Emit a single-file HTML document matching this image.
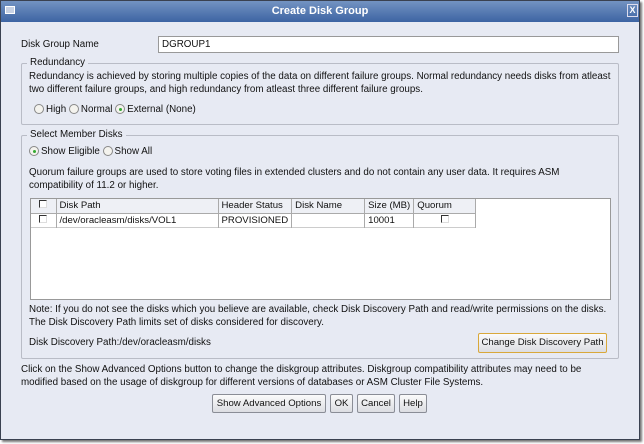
<!DOCTYPE html>
<html><head><style>
*{margin:0;padding:0;box-sizing:border-box}
body{width:644px;height:444px;background:#fff;font-family:"Liberation Sans",sans-serif;font-size:9.8px;color:#111;position:relative;overflow:hidden}
.win{position:absolute;left:0;top:0;width:640px;height:440px;background:#e7eaf3;border:1px solid #3a4150;box-shadow:2px 2px 2px #777}
.title{position:absolute;left:0;top:0;width:638px;height:21px;background:linear-gradient(#7393c2,#3d64a3);color:#fff;font-weight:bold;font-size:11px;text-align:center;line-height:21px}
.t{position:absolute;white-space:nowrap;line-height:12px}
.box{position:absolute;border:1px solid #b9bcc6;border-radius:2px}
.lg{position:absolute;background:#e7eaf3;padding:0 3px;white-space:nowrap;line-height:12px}
.rad{display:inline-block;width:10px;height:10px;border-radius:50%;border:1px solid #888;background:#f4f3ee;vertical-align:-2px;margin-right:2px;position:relative}
.rad.on::after{content:"";position:absolute;left:2.5px;top:2.5px;width:3px;height:3px;border-radius:50%;background:#3a3}
.cb{display:inline-block;width:8px;height:8px;border:1px solid #333;border-right-color:#ddd;border-bottom-color:#ddd;background:#fff}
.btn{position:absolute;border:1px solid #8a8d96;border-radius:2px;background:linear-gradient(#fbfbfb,#dcdde2);text-align:center;line-height:17px;white-space:nowrap;font-size:9.6px}
table{table-layout:fixed;border-collapse:collapse;font-size:9.6px}
td{border-right:1px solid #aaa;padding:0 3px;height:14px;white-space:nowrap;overflow:hidden}
</style></head><body>
<div class="win">
<div class="title">Create Disk Group</div>
<div style="position:absolute;left:4px;top:5px;width:10px;height:8px;border:1px solid #fff;background:#c8d2e4"></div>
<div style="position:absolute;left:626px;top:3px;width:11px;height:13px;border:1px solid #dde;color:#fff;font-weight:bold;font-size:9px;text-align:center;line-height:11px">X</div>
<div class="t" style="left:20px;top:38px">Disk Group Name</div>
<div style="position:absolute;left:157px;top:35px;width:461px;height:17px;background:#fff;border:1px solid #999"></div>
<div class="t" style="left:161px;top:38px">DGROUP1</div>

<div class="box" style="left:20px;top:62px;width:598px;height:62px"></div>
<div class="lg" style="left:26px;top:56px">Redundancy</div>
<div class="t" style="left:28px;top:70px">Redundancy is achieved by storing multiple copies of the data on different failure groups. Normal redundancy needs disks from atleast</div>
<div class="t" style="left:28px;top:83px">two different failure groups, and high redundancy from atleast three different failure groups.</div>
<div class="t" style="left:33px;top:103px"><span class="rad"></span>High <span class="rad"></span>Normal <span class="rad on"></span>External (None)</div>

<div class="box" style="left:20px;top:134px;width:598px;height:224px"></div>
<div class="lg" style="left:26px;top:128px">Select Member Disks</div>
<div class="t" style="left:28px;top:145px"><span class="rad on"></span>Show Eligible <span class="rad"></span>Show All</div>
<div class="t" style="left:28px;top:166px">Quorum failure groups are used to store voting files in extended clusters and do not contain any user data. It requires ASM</div>
<div class="t" style="left:28px;top:179px">compatibility of 11.2 or higher.</div>
<div style="position:absolute;left:29px;top:197px;width:581px;height:102px;background:#fff;border:1px solid #999">
<table>
<colgroup><col style="width:25px"><col style="width:162px"><col style="width:72px"><col style="width:73px"><col style="width:47px"><col style="width:62px"></colgroup>
<tr style="background:#eef0f5;border-bottom:1px solid #aaa"><td style="text-align:center"><span class="cb"></span></td><td>Disk Path</td><td>Header Status</td><td>Disk Name</td><td>Size (MB)</td><td>Quorum</td></tr>
<tr style="border-bottom:1px solid #ccc"><td style="text-align:center"><span class="cb"></span></td><td>/dev/oracleasm/disks/VOL1</td><td>PROVISIONED</td><td></td><td>10001</td><td style="text-align:center"><span class="cb"></span></td></tr>
</table></div>
<div class="t" style="left:28px;top:303px">Note: If you do not see the disks which you believe are available, check Disk Discovery Path and read/write permissions on the disks.</div>
<div class="t" style="left:28px;top:316px">The Disk Discovery Path limits set of disks considered for discovery.</div>
<div class="t" style="left:28px;top:336px">Disk Discovery Path:/dev/oracleasm/disks</div>
<div class="btn" style="left:477px;top:332px;width:129px;height:20px;border-color:#d9a83a">Change Disk Discovery Path</div>

<div class="t" style="left:20px;top:363px">Click on the Show Advanced Options button to change the diskgroup attributes. Diskgroup compatibility attributes may need to be</div>
<div class="t" style="left:20px;top:376px">modified based on the usage of diskgroup for different versions of databases or ASM Cluster File Systems.</div>
<div class="btn" style="left:211px;top:393px;width:114px;height:19px">Show Advanced Options</div>
<div class="btn" style="left:329px;top:393px;width:23px;height:19px">OK</div>
<div class="btn" style="left:356px;top:393px;width:38px;height:19px">Cancel</div>
<div class="btn" style="left:398px;top:393px;width:28px;height:19px">Help</div>
</div>
</body></html>
